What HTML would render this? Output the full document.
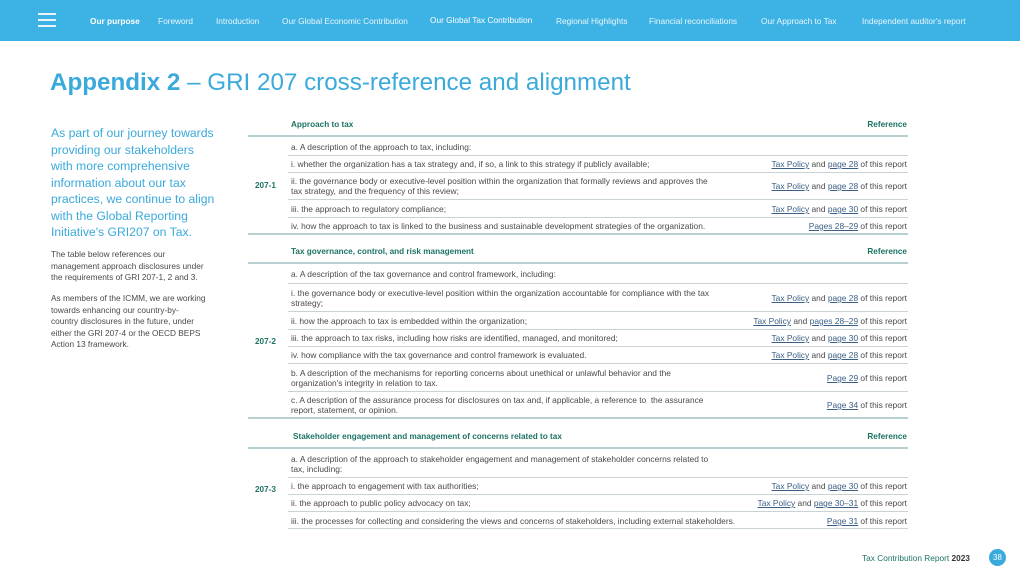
<!DOCTYPE html>
<html><head><meta charset="utf-8"><style>
*{margin:0;padding:0;box-sizing:border-box}
body{width:1020px;height:577px;position:relative;background:#fff;font-family:"Liberation Sans",sans-serif;overflow:hidden;color:#4a4a4a}
.nav{position:absolute;left:0;top:0;width:1020px;height:41px;background:#3db2e4}
.nav span{position:absolute;top:16px;font-size:8.3px;color:#eaf6fc;white-space:nowrap}
.ham{position:absolute;left:38px;width:18px;height:2px;background:#e8f5fc}
.t{position:absolute;white-space:nowrap;font-size:8.4px;color:#4a4a4a;line-height:10px}
.h{position:absolute;font-size:8.2px;font-weight:bold;color:#1c7364;white-space:nowrap}
.r{position:absolute;right:113px;font-size:8.4px;white-space:nowrap;color:#4a4a4a;line-height:10px}
.r u{color:#3a5e84;text-decoration:underline}
.l{position:absolute;left:288px;width:620px;height:1px;background:#c9d3d6}
.L{position:absolute;left:248px;width:660px;height:2px;background:#b9d0d2}
.c{position:absolute;left:255px;font-size:8.2px;font-weight:bold;color:#1c7364}
.p{position:absolute;left:51px;font-size:8.3px;line-height:11.6px;color:#4a4a4a;white-space:nowrap}
</style></head><body>
<div class="nav">
<div class="ham" style="top:13px"></div><div class="ham" style="top:19px"></div><div class="ham" style="top:25px"></div>
<span style="left:90px;font-weight:bold;color:#fff">Our purpose</span>
<span style="left:158px">Foreword</span>
<span style="left:216px">Introduction</span>
<span style="left:282px">Our Global Economic Contribution</span>
<span style="left:430px;top:15px;color:#fff">Our Global Tax Contribution</span>
<span style="left:556px">Regional Highlights</span>
<span style="left:649px">Financial reconciliations</span>
<span style="left:761px">Our Approach to Tax</span>
<span style="left:862px">Independent auditor's report</span>
</div>
<div style="position:absolute;left:50px;top:69px;font-size:24.2px;color:#3aa9db;white-space:nowrap"><b>Appendix 2</b> – GRI 207 cross-reference and alignment</div>
<div style="position:absolute;left:51px;top:125px;font-size:12.2px;line-height:16.5px;color:#3aa9db;white-space:nowrap">As part of our journey towards<br>providing our stakeholders<br>with more comprehensive<br>information about our tax<br>practices, we continue to align<br>with the Global Reporting<br>Initiative's GRI207 on Tax.</div>
<div class="p" style="top:249px">The table below references our<br>management approach disclosures under<br>the requirements of GRI 207-1, 2 and 3.</div>
<div class="p" style="top:293px">As members of the ICMM, we are working<br>towards enhancing our country-by-<br>country disclosures in the future, under<br>either the GRI 207-4 or the OECD BEPS<br>Action 13 framework.</div>

<div class="h" style="left:291px;top:120px">Approach to tax</div><div class="h" style="right:113px;top:120px">Reference</div>
<div class="L" style="top:135px"></div>
<div class="t" style="left:291px;top:142px">a. A description of the approach to tax, including:</div><div class="l" style="top:155px"></div>
<div class="t" style="left:291px;top:159px">i. whether the organization has a tax strategy and, if so, a link to this strategy if publicly available;</div><div class="r" style="top:159px"><u>Tax Policy</u> and <u>page 28</u> of this report</div><div class="l" style="top:172px"></div>
<div class="t" style="left:291px;top:176px">ii. the governance body or executive-level position within the organization that formally reviews and approves the<br>tax strategy, and the frequency of this review;</div><div class="r" style="top:181px"><u>Tax Policy</u> and <u>page 28</u> of this report</div><div class="l" style="top:199px"></div>
<div class="c" style="top:181px">207-1</div>
<div class="t" style="left:291px;top:204px">iii. the approach to regulatory compliance;</div><div class="r" style="top:204px"><u>Tax Policy</u> and <u>page 30</u> of this report</div><div class="l" style="top:217px"></div>
<div class="t" style="left:291px;top:221px">iv. how the approach to tax is linked to the business and sustainable development strategies of the organization.</div><div class="r" style="top:221px"><u>Pages 28–29</u> of this report</div>
<div class="L" style="top:233px"></div>

<div class="h" style="left:291px;top:247px">Tax governance, control, and risk management</div><div class="h" style="right:113px;top:247px">Reference</div>
<div class="L" style="top:262px"></div>
<div class="t" style="left:291px;top:269px">a. A description of the tax governance and control framework, including:</div><div class="l" style="top:283px"></div>
<div class="t" style="left:291px;top:288px">i. the governance body or executive-level position within the organization accountable for compliance with the tax<br>strategy;</div><div class="r" style="top:293px"><u>Tax Policy</u> and <u>page 28</u> of this report</div><div class="l" style="top:311px"></div>
<div class="t" style="left:291px;top:316px">ii. how the approach to tax is embedded within the organization;</div><div class="r" style="top:316px"><u>Tax Policy</u> and <u>pages 28–29</u> of this report</div><div class="l" style="top:329px"></div>
<div class="c" style="top:337px">207-2</div>
<div class="t" style="left:291px;top:333px">iii. the approach to tax risks, including how risks are identified, managed, and monitored;</div><div class="r" style="top:333px"><u>Tax Policy</u> and <u>page 30</u> of this report</div><div class="l" style="top:346px"></div>
<div class="t" style="left:291px;top:350px">iv. how compliance with the tax governance and control framework is evaluated.</div><div class="r" style="top:350px"><u>Tax Policy</u> and <u>page 28</u> of this report</div><div class="l" style="top:363px"></div>
<div class="t" style="left:291px;top:368px">b. A description of the mechanisms for reporting concerns about unethical or unlawful behavior and the<br>organization's integrity in relation to tax.</div><div class="r" style="top:373px"><u>Page 29</u> of this report</div><div class="l" style="top:391px"></div>
<div class="t" style="left:291px;top:395px">c. A description of the assurance process for disclosures on tax and, if applicable, a reference to &nbsp;the assurance<br>report, statement, or opinion.</div><div class="r" style="top:400px"><u>Page 34</u> of this report</div>
<div class="L" style="top:417px"></div>

<div class="h" style="left:293px;top:432px">Stakeholder engagement and management of concerns related to tax</div><div class="h" style="right:113px;top:432px">Reference</div>
<div class="L" style="top:447px"></div>
<div class="t" style="left:291px;top:454px">a. A description of the approach to stakeholder engagement and management of stakeholder concerns related to<br>tax, including:</div><div class="l" style="top:477px"></div>
<div class="c" style="top:485px">207-3</div>
<div class="t" style="left:291px;top:481px">i. the approach to engagement with tax authorities;</div><div class="r" style="top:481px"><u>Tax Policy</u> and <u>page 30</u> of this report</div><div class="l" style="top:494px"></div>
<div class="t" style="left:291px;top:498px">ii. the approach to public policy advocacy on tax;</div><div class="r" style="top:498px"><u>Tax Policy</u> and <u>page 30–31</u> of this report</div><div class="l" style="top:511px"></div>
<div class="t" style="left:291px;top:516px">iii. the processes for collecting and considering the views and concerns of stakeholders, including external stakeholders.</div><div class="r" style="top:516px"><u>Page 31</u> of this report</div><div class="l" style="top:528px"></div>

<div style="position:absolute;left:862px;top:553px;font-size:8.3px;color:#1c7364;white-space:nowrap">Tax Contribution Report <b style="color:#333">2023</b></div>
<div style="position:absolute;left:989px;top:549px;width:17px;height:17px;border-radius:50%;background:#3aa9db;color:#fff;font-size:8px;text-align:center;line-height:17px">38</div>
</body></html>
